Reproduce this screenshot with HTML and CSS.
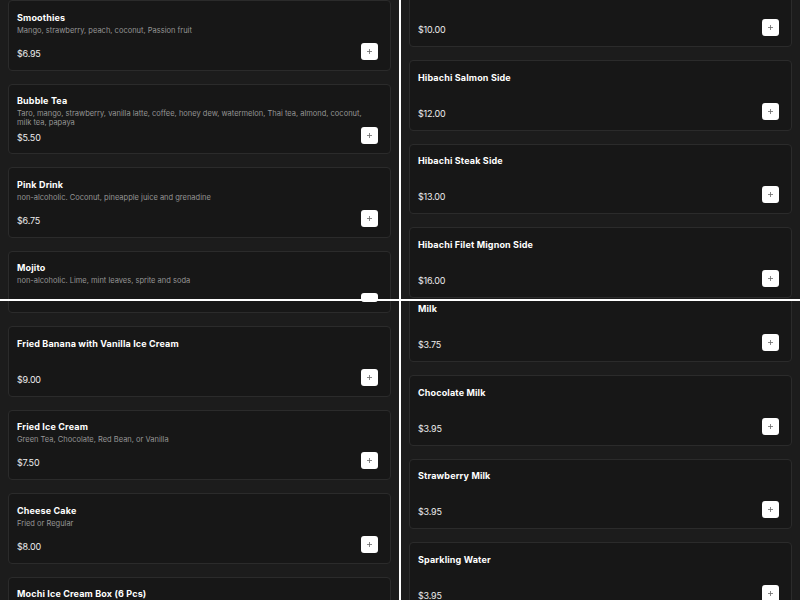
FILE: index.html
```html
<!DOCTYPE html>
<html lang="en">
<head>
<meta charset="utf-8">
<title>Menu</title>
<link rel="stylesheet" href="styles.css">
</head>
<body>
<div class="grid">
  <section class="panel">
    <div class="list list-drinks">
      <div class="card"><div class="title">Smoothies</div><div class="desc">Mango, strawberry, peach, coconut, Passion fruit</div><div class="row"><span class="price">$6.95</span><button class="add"><svg viewBox="0 0 7 7" width="7" height="7"><path d="M3.5 1v5M1 3.5h5"/></svg></button></div></div>
      <div class="card"><div class="title">Bubble Tea</div><div class="desc">Taro, mango, strawberry, vanilla latte, coffee, honey dew, watermelon, Thai tea, almond, coconut, milk tea, papaya</div><div class="row"><span class="price">$5.50</span><button class="add"><svg viewBox="0 0 7 7" width="7" height="7"><path d="M3.5 1v5M1 3.5h5"/></svg></button></div></div>
      <div class="card"><div class="title">Pink Drink</div><div class="desc">non-alcoholic. Coconut, pineapple juice and grenadine</div><div class="row"><span class="price">$6.75</span><button class="add"><svg viewBox="0 0 7 7" width="7" height="7"><path d="M3.5 1v5M1 3.5h5"/></svg></button></div></div>
      <div class="card"><div class="title">Mojito</div><div class="desc">non-alcoholic. Lime, mint leaves, sprite and soda</div><div class="row"><span class="price">$6.75</span><button class="add"><svg viewBox="0 0 7 7" width="7" height="7"><path d="M3.5 1v5M1 3.5h5"/></svg></button></div></div>
    </div>
  </section>
  <section class="panel">
    <div class="list list-sides">
      <div class="card"><div class="title">Hibachi Chicken Side</div><div class="row"><span class="price">$10.00</span><button class="add"><svg viewBox="0 0 7 7" width="7" height="7"><path d="M3.5 1v5M1 3.5h5"/></svg></button></div></div>
      <div class="card"><div class="title">Hibachi Salmon Side</div><div class="row"><span class="price">$12.00</span><button class="add"><svg viewBox="0 0 7 7" width="7" height="7"><path d="M3.5 1v5M1 3.5h5"/></svg></button></div></div>
      <div class="card"><div class="title">Hibachi Steak Side</div><div class="row"><span class="price">$13.00</span><button class="add"><svg viewBox="0 0 7 7" width="7" height="7"><path d="M3.5 1v5M1 3.5h5"/></svg></button></div></div>
      <div class="card"><div class="title">Hibachi Filet Mignon Side</div><div class="row"><span class="price">$16.00</span><button class="add"><svg viewBox="0 0 7 7" width="7" height="7"><path d="M3.5 1v5M1 3.5h5"/></svg></button></div></div>
    </div>
  </section>
  <section class="panel">
    <div class="list list-desserts">
      <div class="card"><div class="row"><span class="price"></span><button class="add"><svg viewBox="0 0 7 7" width="7" height="7"><path d="M3.5 1v5M1 3.5h5"/></svg></button></div></div>
      <div class="card"><div class="title">Fried Banana with Vanilla Ice Cream</div><div class="row"><span class="price">$9.00</span><button class="add"><svg viewBox="0 0 7 7" width="7" height="7"><path d="M3.5 1v5M1 3.5h5"/></svg></button></div></div>
      <div class="card"><div class="title">Fried Ice Cream</div><div class="desc">Green Tea, Chocolate, Red Bean, or Vanilla</div><div class="row"><span class="price">$7.50</span><button class="add"><svg viewBox="0 0 7 7" width="7" height="7"><path d="M3.5 1v5M1 3.5h5"/></svg></button></div></div>
      <div class="card"><div class="title">Cheese Cake</div><div class="desc">Fried or Regular</div><div class="row"><span class="price">$8.00</span><button class="add"><svg viewBox="0 0 7 7" width="7" height="7"><path d="M3.5 1v5M1 3.5h5"/></svg></button></div></div>
      <div class="card"><div class="title">Mochi Ice Cream Box (6 Pcs)</div><div class="row"><span class="price">$9.00</span><button class="add"><svg viewBox="0 0 7 7" width="7" height="7"><path d="M3.5 1v5M1 3.5h5"/></svg></button></div></div>
    </div>
  </section>
  <section class="panel">
    <div class="list list-milk">
      <div class="card"><div class="title">Milk</div><div class="row"><span class="price">$3.75</span><button class="add"><svg viewBox="0 0 7 7" width="7" height="7"><path d="M3.5 1v5M1 3.5h5"/></svg></button></div></div>
      <div class="card"><div class="title">Chocolate Milk</div><div class="row"><span class="price">$3.95</span><button class="add"><svg viewBox="0 0 7 7" width="7" height="7"><path d="M3.5 1v5M1 3.5h5"/></svg></button></div></div>
      <div class="card"><div class="title">Strawberry Milk</div><div class="row"><span class="price">$3.95</span><button class="add"><svg viewBox="0 0 7 7" width="7" height="7"><path d="M3.5 1v5M1 3.5h5"/></svg></button></div></div>
      <div class="card"><div class="title">Sparkling Water</div><div class="row"><span class="price">$3.95</span><button class="add"><svg viewBox="0 0 7 7" width="7" height="7"><path d="M3.5 1v5M1 3.5h5"/></svg></button></div></div>
    </div>
  </section>
</div>
</body>
</html>
```
FILE: styles.css
```css
* { box-sizing: border-box; }
html, body { margin: 0; padding: 0; background: #ffffff; }
body { font-family: Inter, "Noto Sans", sans-serif; }

.grid {
  display: grid;
  grid-template-columns: 399px 399px;
  grid-template-rows: 299px 299px;
  gap: 2px;
  width: 800px;
  height: 600px;
  background: #ffffff;
}

.panel {
  background: #1c1c1c;
  overflow: hidden;
}

.list {
  display: flex;
  flex-direction: column;
  gap: 13px;
  padding: 0 8px;
}

.list-drinks { margin-top: 0; }
.list-sides { margin-top: -23.2px; }
.list-desserts { margin-top: -58.2px; }
.list-milk { margin-top: -9.5px; }

.card {
  height: 70.5px;
  flex: none;
  display: flex;
  flex-direction: column;
  background: #171717;
  border: 1px solid #2b2b2b;
  border-radius: 4px;
  padding: 9.5px 12px 11px 8px;
  overflow: hidden;
}

.title {
  font-size: 9px;
  line-height: 13px;
  font-weight: 700;
  color: #ffffff;
  letter-spacing: 0.15px;
}

.desc {
  margin-top: 2px;
  font-size: 7.5px;
  line-height: 9px;
  color: #959595;
}

.row {
  margin-top: auto;
  display: flex;
  align-items: flex-end;
  justify-content: space-between;
}

.price {
  font-size: 9px;
  line-height: 10px;
  color: #ececec;
  letter-spacing: -0.2px;
}

.add {
  width: 17px;
  height: 17px;
  padding: 0;
  border: none;
  border-radius: 3px;
  background: #ffffff;
  display: flex;
  align-items: center;
  justify-content: center;
  margin-bottom: -1px;
}

.add svg path {
  fill: none;
  stroke: #6a6a6a;
  stroke-width: 0.8;
}
```
